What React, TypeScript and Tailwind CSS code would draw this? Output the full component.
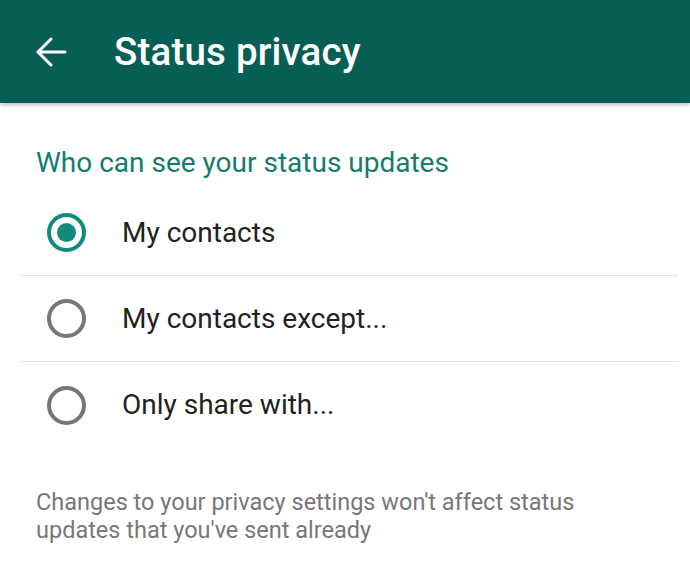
const OPTIONS = ["My contacts", "My contacts except...", "Only share with..."];

const BackArrow = () => (
  <svg width="32" height="32" viewBox="0 0 16 16" fill="none" stroke="white" strokeWidth="1.5" strokeLinecap="round" strokeLinejoin="round">
    <path d="M15 8H1.5M8 1.5 1.5 8 8 14.5" />
  </svg>
);

const Radio = ({ checked }: { checked: boolean }) =>
  checked ? (
    <span className="flex h-[39px] w-[39px] items-center justify-center rounded-full border-[4px] border-[#138a7c]">
      <span className="h-[19px] w-[19px] rounded-full bg-[#138a7c]" />
    </span>
  ) : (
    <span className="h-[39px] w-[39px] rounded-full border-[4px] border-[#767676]" />
  );

export default function App() {
  return (
    <div className="h-[564px] w-[690px] bg-white font-['Roboto',sans-serif]">
      <header className="flex h-[103px] items-center bg-[#075e54] shadow-[0_2px_4px_rgba(0,0,0,0.25)]">
        <div className="ml-[35px] flex w-[79px]">
          <BackArrow />
        </div>
        <h1 className="text-[38.5px] font-medium tracking-[0.2px] text-white">Status privacy</h1>
      </header>

      <p className="ml-[36px] mt-[42px] text-[28px] leading-[36px] text-[#137c70]">
        Who can see your status updates
      </p>

      <ul className="ml-[19px] mr-[12px] mt-[9px]">
        {OPTIONS.map((label, i) => (
          <li
            key={label}
            className={`flex h-[86px] items-center ${i < OPTIONS.length - 1 ? "border-b border-[#e3e3e3]" : ""}`}
          >
            <div className="ml-[28px] flex w-[75px]">
              <Radio checked={i === 0} />
            </div>
            <span className="text-[28px] text-[#222222]">{label}</span>
          </li>
        ))}
      </ul>

      <p className="ml-[36px] mt-[40px] text-[23.5px] leading-[28px] text-[#777777]">
        Changes to your privacy settings won't affect status
        <br />
        updates that you've sent already
      </p>
    </div>
  );
}
